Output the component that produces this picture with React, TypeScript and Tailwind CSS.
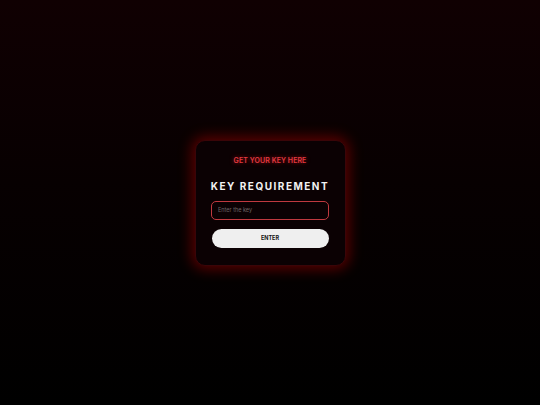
export default function App() {
  return (
    <div
      className="min-h-screen w-full flex items-center justify-center bg-[linear-gradient(to_bottom,#100002_0%,#070001_45%,#000000_100%)]"
      style={{ fontFamily: 'Inter, "Liberation Sans", sans-serif' }}
    >
      {/* key card */}
      <div className="w-[151px] h-[126px] rounded-[10px] bg-[#0b0103] border border-[#3a0508] shadow-[0_0_14px_3px_rgba(200,0,0,0.45)] px-4 pt-[15px] flex flex-col items-center">
        <a
          href="#"
          className="whitespace-nowrap text-[7px] leading-[10px] font-semibold tracking-[0.01em] text-[#e23a40] [text-shadow:0_0_4px_rgba(255,30,40,0.6)]"
        >
          GET YOUR KEY HERE
        </a>
        <h1 className="mt-[13px] whitespace-nowrap text-center text-[10px] leading-[14px] font-bold tracking-[0.15em] text-[#f2f2f2]">
          KEY REQUIREMENT
        </h1>
        <input
          type="text"
          placeholder="Enter the key"
          className="mt-[8px] w-[118px] h-[19px] shrink-0 rounded-[5px] border border-[#c0393f] bg-transparent px-[6px] text-[5.5px] text-white placeholder:text-[#6e6466] outline-none"
        />
        <button className="mt-[9px] w-[117px] h-[19px] shrink-0 rounded-full bg-[#efefef] text-[5.5px] font-bold text-[#151515]">
          ENTER
        </button>
      </div>
    </div>
  );
}
